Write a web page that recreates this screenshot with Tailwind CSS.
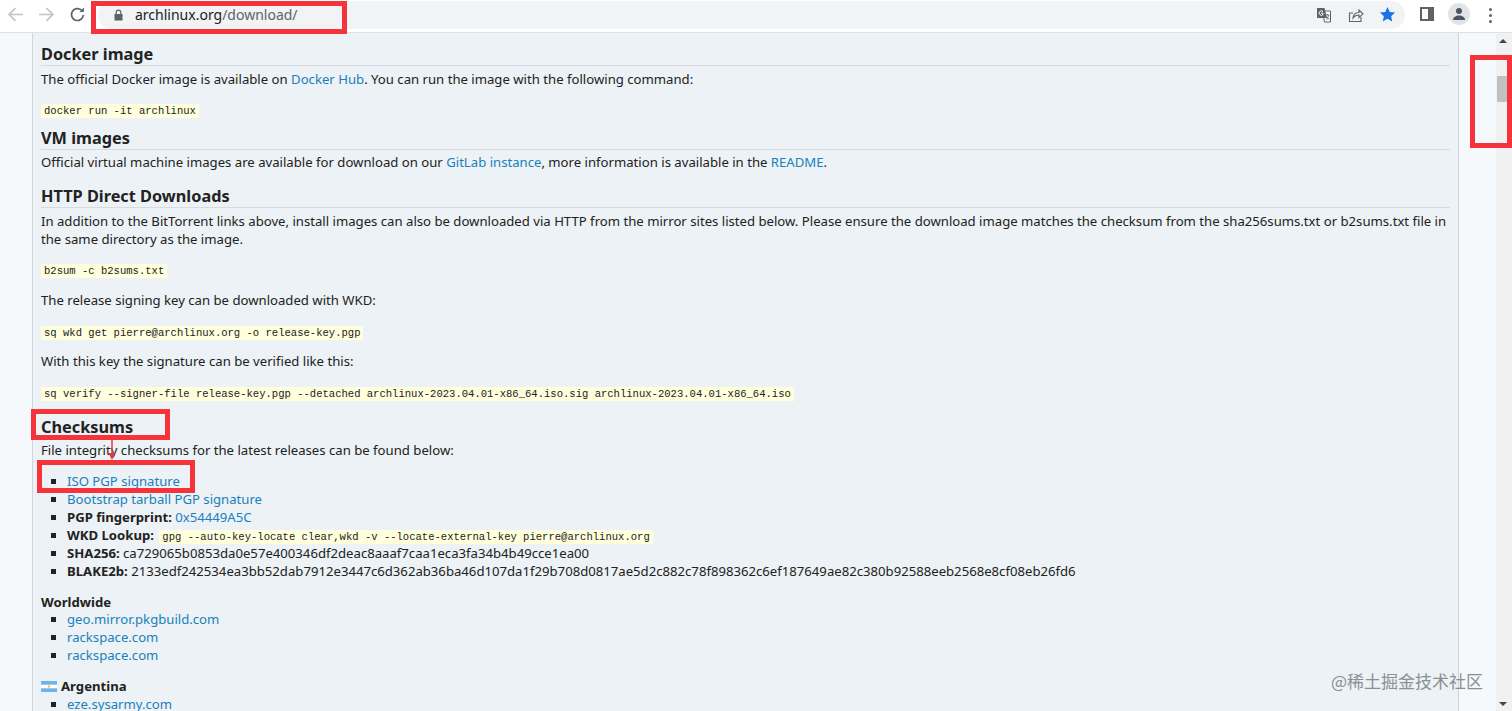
<!DOCTYPE html>
<html lang="en">
<head>
    <meta charset="UTF-8">
    <title>Arch Linux - Downloads</title>
    <script src="https://cdn.jsdelivr.net/npm/@tailwindcss/browser@4"></script>
</head>
<body class="w-[1512px] h-[711px] overflow-hidden relative bg-[#f6f9fc] font-['Noto_Sans',sans-serif] text-[13.15px] text-[#222]">

    <!-- Browser toolbar -->
    <header class="h-[33px] bg-white border-b border-[#dfe1e5] flex items-center pb-[3px] relative">
        <div class="flex items-center w-[98px] pl-[7px] gap-[14px]">
            <svg class="w-[17px] h-[17px]" viewBox="0 0 16 16" fill="none" stroke="#c2c4c7" stroke-width="1.6"><path d="M15 8H2M8 2L2 8l6 6"/></svg>
            <svg class="w-[17px] h-[17px]" viewBox="0 0 16 16" fill="none" stroke="#c2c4c7" stroke-width="1.6"><path d="M1 8h13M8 2l6 6-6 6"/></svg>
            <svg class="w-[17px] h-[17px]" viewBox="0 0 16 16" fill="none" stroke="#5f6368" stroke-width="1.6"><path d="M13.5 8.500A5.600 5.600 0 1 1 11.800 4"/><path d="M14 1.500v4.200H9.800" fill="#5f6368" stroke="none"/></svg>
        </div>
        <div class="w-[1307px] h-[28px] bg-[#f1f3f4] rounded-full flex items-center pl-[15px] justify-between">
            <div class="flex items-center gap-[11px]">
                <svg class="w-[11px] h-[12px]" viewBox="0 0 11 12" fill="#5f6368"><path d="M1.500 5h8v6.500h-8z"/><path d="M3.200 5V3.400a2.300 2.300 0 0 1 4.600 0V5" fill="none" stroke="#5f6368" stroke-width="1.200"/></svg>
                <span class="text-[14px] text-[#202124] leading-none">archlinux.org<span class="text-[#5f6368]">/download/</span></span>
            </div>
            <div class="flex items-center gap-[15px] pr-[9px]">
                <!-- translate -->
                <svg class="w-[16px] h-[16px] -ml-[1px] mr-[1px]" viewBox="0 0 16 16"><path d="M6.500 4H14.500V15H8.500z" fill="#fff" stroke="#5f6368"/><path d="M9.500 8h4M11.500 7v1M10.500 13l2.500-5M10.500 9.500l3 3" stroke="#5f6368" stroke-width=".8" fill="none"/><path d="M1 1H8.500L11 11H1z" fill="#5f6368"/><path d="M7 4.600A2.200 2.200 0 1 0 7 7.600V6.200H5.200" stroke="#fff" fill="none"/></svg>
                <!-- share -->
                <svg class="w-[16px] h-[16px]" viewBox="0 0 16 16" fill="none" stroke="#5f6368" stroke-width="1.100"><path d="M13 10v4.500H1.500V6h3.500"/><path d="M5 11c.4-3.600 3-5.500 6-5.500V3l4 3.800-4 3.700V8C8.500 8 6.500 9 5 11z"/></svg>
                <!-- bookmark -->
                <svg class="w-[17px] h-[17px]" viewBox="0 0 24 24" fill="#1a73e8"><path d="M12 1.500l3.200 7 7.500.8-5.600 5.100 1.600 7.400L12 18.100l-6.700 3.700 1.600-7.400L1.300 9.300l7.500-.8z"/></svg>
            </div>
        </div>
        <div class="absolute left-[1420px] top-[7px] w-[14px] h-[14px] border-2 border-r-[6px] border-[#5f6368] bg-white"></div>
        <div class="absolute left-[1448px] top-[3px] w-[22px] h-[22px] rounded-full bg-[#e1e3e6] flex items-center justify-center">
            <svg class="w-[14px] h-[14px]" viewBox="0 0 14 14" fill="#4b5563"><circle cx="7" cy="4" r="3"/><path d="M1 13c0-3 3-4.500 6-4.500s6 1.500 6 4.500z"/></svg>
        </div>
        <div class="absolute left-[1489px] top-[8px] flex flex-col gap-[3px]">
            <span class="w-[3px] h-[3px] rounded-full bg-[#5f6368]"></span>
            <span class="w-[3px] h-[3px] rounded-full bg-[#5f6368]"></span>
            <span class="w-[3px] h-[3px] rounded-full bg-[#5f6368]"></span>
        </div>
    </header>

    <!-- Page -->
    <div class="flex h-[678px] overflow-hidden">
        <main class="ml-[32px] w-[1427px] bg-[#ecf2f5] border-x border-[#cfd6db] pl-[8px] pr-[8px] pt-[11px] shrink-0">
            <h3 class="text-[16.3px] font-bold leading-[20px] pb-[1px] border-b border-[#d5dbe0] text-[#222]">Docker image</h3>
            <p class="leading-[20px] mt-[3px]">The official Docker image is available on <a class="text-[#1a80bd]">Docker Hub</a>. You can run the image with the following command:</p>
            <div class="mt-[11px] h-[19px] leading-[18px]"><code class="bg-[#ffd] px-[3px] py-[1px] font-['Liberation_Mono',monospace] text-[10.55px]">docker run -it archlinux</code></div>

            <h3 class="text-[16.3px] font-bold leading-[20px] pb-[1px] border-b border-[#d5dbe0] mt-[9px]">VM images</h3>
            <p class="leading-[20px] mt-[2px]">Official virtual machine images are available for download on our <a class="text-[#1a80bd]">GitLab instance</a>, more information is available in the <a class="text-[#1a80bd]">README</a>.</p>

            <h3 class="text-[16.3px] font-bold leading-[20px] pb-[1px] border-b border-[#d5dbe0] mt-[14px]">HTTP Direct Downloads</h3>
            <p class="leading-[18px] mt-[4px]">In addition to the BitTorrent links above, install images can also be downloaded via HTTP from the mirror sites listed below. Please ensure the download image matches the checksum from the sha256sums.txt or b2sums.txt file in the same directory as the image.</p>
            <div class="mt-[12px] h-[18px] leading-[18px]"><code class="bg-[#ffd] px-[3px] py-[1px] font-['Liberation_Mono',monospace] text-[10.55px]">b2sum -c b2sums.txt</code></div>
            <p class="leading-[18px] mt-[13px]">The release signing key can be downloaded with WKD:</p>
            <div class="mt-[13px] h-[18px] leading-[18px]"><code class="bg-[#ffd] px-[3px] py-[1px] font-['Liberation_Mono',monospace] text-[10.55px]">sq wkd get pierre@archlinux.org -o release-key.pgp</code></div>
            <p class="leading-[18px] mt-[12px]">With this key the signature can be verified like this:</p>
            <div class="mt-[13px] h-[18px] leading-[18px]"><code class="bg-[#ffd] px-[3px] py-[1px] font-['Liberation_Mono',monospace] text-[10.55px]">sq verify --signer-file release-key.pgp --detached archlinux-2023.04.01-x86_64.iso.sig archlinux-2023.04.01-x86_64.iso</code></div>

            <h3 class="text-[16.3px] font-bold leading-[20px] mt-[16px]">Checksums</h3>
            <p class="leading-[18px] mt-[4px]">File integrity checksums for the latest releases can be found below:</p>
            <ul class="list-[square] pl-[26px] mt-[13px] leading-[18px]">
                <li class="h-[18px]"><a class="text-[#1a80bd]">ISO PGP signature</a></li>
                <li class="h-[18px]"><a class="text-[#1a80bd]">Bootstrap tarball PGP signature</a></li>
                <li class="h-[18px]"><b>PGP fingerprint:</b> <a class="text-[#1a80bd]">0x54449A5C</a></li>
                <li class="h-[18px]"><b>WKD Lookup:</b> <code class="bg-[#ffd] ml-[2px] px-[3px] py-[1px] font-['Liberation_Mono',monospace] text-[10.55px]">gpg --auto-key-locate clear,wkd -v --locate-external-key pierre@archlinux.org</code></li>
                <li class="h-[18px]"><b>SHA256:</b> ca729065b0853da0e57e400346df2deac8aaaf7caa1eca3fa34b4b49cce1ea00</li>
                <li class="h-[18px]"><b>BLAKE2b:</b> 2133edf242534ea3bb52dab7912e3447c6d362ab36ba46d107da1f29b708d0817ae5d2c882c78f898362c6ef187649ae82c380b92588eeb2568e8cf08eb26fd6</li>
            </ul>

            <h5 class="font-bold leading-[18px] mt-[13px]">Worldwide</h5>
            <ul class="list-[square] pl-[26px] leading-[18px] -mt-[1px]">
                <li><a class="text-[#1a80bd]">geo.mirror.pkgbuild.com</a></li>
                <li><a class="text-[#1a80bd]">rackspace.com</a></li>
                <li><a class="text-[#1a80bd]">rackspace.com</a></li>
            </ul>
            <h5 class="font-bold leading-[18px] mt-[13px] flex items-center gap-[4px]">
                <svg class="w-[16px] h-[11px]" viewBox="0 0 16 11"><rect width="16" height="11" fill="#fff"/><rect width="16" height="3.700" fill="#6cb4ee"/><rect y="7.300" width="16" height="3.700" fill="#6cb4ee"/><circle cx="8" cy="5.500" r="1.200" fill="#f6c445"/></svg>
                Argentina
            </h5>
            <ul class="list-[square] pl-[26px] leading-[18px]">
                <li><a class="text-[#1a80bd]">eze.sysarmy.com</a></li>
            </ul>
        </main>

        <!-- Scrollbar -->
        <div class="ml-auto w-[16px] bg-[#f1f1f1] relative">
            <div class="absolute top-[43px] left-[1px] w-[12px] h-[26px] bg-[#c1c1c1]"></div>
            <div class="absolute top-[6px] left-[3px] w-0 h-0 border-x-[4px] border-x-transparent border-b-[4px] border-b-[#444]"></div>
            <div class="absolute bottom-[5px] left-[3px] w-0 h-0 border-x-[4px] border-x-transparent border-t-[4px] border-t-[#444]"></div>
        </div>
    </div>

    <!-- Red annotation boxes -->
    <div class="absolute left-[91px] top-[1px] w-[256px] h-[33px] border-[5px] border-[#f5333a]"></div>
    <div class="absolute left-[1470px] top-[55px] w-[42px] h-[93px] border-[5px] border-[#f5333a]"></div>
    <div class="absolute left-[31px] top-[409px] w-[139px] h-[31px] border-[5px] border-[#f5333a]"></div>
    <div class="absolute left-[37px] top-[460px] w-[158px] h-[33px] border-[5px] border-[#f5333a]"></div>
    <svg class="absolute left-[106px] top-[438px] w-[12px] h-[24px]" viewBox="0 0 12 24"><path d="M6 0v16" stroke="#f5333a" stroke-width="1.500"/><path d="M2.500 15h6.500l-3 7z" fill="#f5333a"/></svg>

    <!-- Watermark -->
    <div class="absolute left-[1331px] top-[671px] text-[17px] text-[#8a8f94] font-['Noto_Sans_CJK_SC',sans-serif] leading-[20px]">@稀土掘金技术社区</div>
</body>
</html>
